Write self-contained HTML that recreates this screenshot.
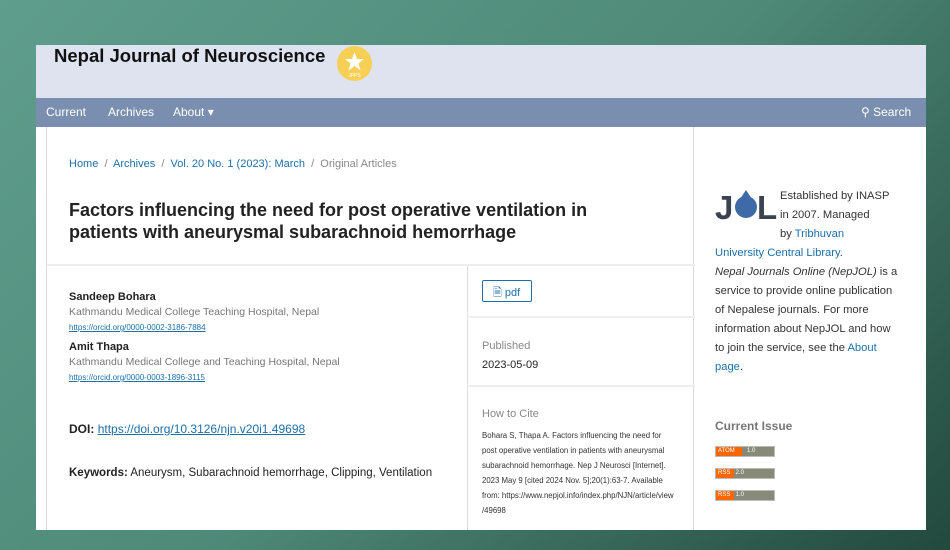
<!DOCTYPE html>
<html><head><meta charset="utf-8"><style>
*{margin:0;padding:0;box-sizing:border-box}
body{width:950px;height:550px;overflow:hidden;background:linear-gradient(135deg,#5f9d8c 0%,#4f8a78 50%,#22493e 100%);font-family:"Liberation Sans",sans-serif;position:relative;color:#222}
.page{position:absolute;left:36px;top:45px;width:890px;height:485px;background:#fff;overflow:hidden}
.hdr{position:absolute;left:0;top:0;width:890px;height:53px;background:#dfe3f0}
.hdr h1{position:absolute;left:18px;top:0;font-size:18.5px;font-weight:bold;color:#111}
.badge{position:absolute;left:301px;top:1px;width:35px;height:35px;border-radius:50%;background:#f8cf55}
.nav{position:absolute;left:0;top:53px;width:890px;height:29px;background:#7a8fb0;color:#fff;font-size:12px}
.nav span{position:absolute;top:7px}
a,.lk{color:#1d6fa8}
.main{position:absolute;left:10px;top:82px;width:648px;height:410px;border-left:1px solid #ddd;border-right:1px solid #ddd}
.side{position:absolute;left:679px;top:82px;width:200px}
.abs{position:absolute}
.bc{left:22px;top:31px;font-size:11px;color:#888}
.bc a{color:#1d6fa8;text-decoration:none}
.ttl{left:22px;top:72px;font-size:18px;font-weight:bold;line-height:22px;color:#222;width:560px}
.hl{left:0;top:137px;width:648px;height:2px;background:#eee}
.vl{left:420px;top:139px;width:1px;height:280px;background:#ddd}
.name{font-size:11px;font-weight:bold;color:#222}
.aff{font-size:10.5px;color:#777}
.orc{font-size:8px;color:#1d6fa8;text-decoration:underline}
.sm{font-size:11px;color:#888}
.rb{position:absolute;left:0;width:60px;height:11px;background:#888a78;border:1px solid #bbb;font-size:6px;line-height:9px;color:#fff}
.rb span{display:inline-block;height:9px;background:#f60;padding-left:2px}
</style></head><body>
<div class="page">
<div class="hdr"><h1>Nepal Journal of Neuroscience</h1>
<div class="badge"><svg width="35" height="35" viewBox="0 0 35 35"><polygon points="17.5,6 20,13 27,13 21.5,17.5 23.5,24.5 17.5,20 11.5,24.5 13.5,17.5 8,13 15,13" fill="#fff"/><text x="17.5" y="31" font-size="5" fill="#fff" text-anchor="middle" font-family="Liberation Sans">JPPS</text></svg></div></div>
<div class="nav"><span style="left:10px">Current</span><span style="left:72px">Archives</span><span style="left:137px">About ▾</span><span style="left:825px">⚲ Search</span></div>
<div class="main">
<div class="abs bc"><a>Home</a> &nbsp;/&nbsp; <a>Archives</a> &nbsp;/&nbsp; <a>Vol. 20 No. 1 (2023): March</a> &nbsp;/&nbsp; Original Articles</div>
<div class="abs ttl">Factors influencing the need for post operative ventilation in patients with aneurysmal subarachnoid hemorrhage</div>
<div class="abs hl"></div>
<div class="abs vl"></div>
<div class="abs" style="left:420px;top:189px;width:228px;height:2px;background:#eee"></div>
<div class="abs" style="left:420px;top:258px;width:228px;height:2px;background:#eee"></div>
<div class="abs" style="left:22px;top:163px;line-height:15px">
<div class="name">Sandeep Bohara</div><div class="aff">Kathmandu Medical College Teaching Hospital, Nepal</div><div class="orc">https://orcid.org/0000-0002-3186-7884</div>
<div class="name" style="margin-top:5px">Amit Thapa</div><div class="aff">Kathmandu Medical College and Teaching Hospital, Nepal</div><div class="orc">https://orcid.org/0000-0003-1896-3115</div></div>
<div class="abs" style="left:22px;top:295px;font-size:12px"><b>DOI:</b> <span class="lk" style="text-decoration:underline">https://doi.org/10.3126/njn.v20i1.49698</span></div>
<div class="abs" style="left:22px;top:340px;font-size:11.5px"><b>Keywords:</b> Aneurysm, Subarachnoid hemorrhage, Clipping, Ventilation</div>
<div class="abs" style="left:435px;top:153px;width:50px;height:22px;border:1px solid #1d6fa8;border-radius:2px;font-size:11px;color:#1d6fa8;padding:3px 0 0 10px">🗎 pdf</div>
<div class="abs sm" style="left:435px;top:213px">Published</div>
<div class="abs" style="left:435px;top:232px;font-size:11px">2023-05-09</div>
<div class="abs sm" style="left:435px;top:281px">How to Cite</div>
<div class="abs" style="left:435px;top:301px;font-size:7.8px;line-height:15px;width:195px;color:#333">Bohara S, Thapa A. Factors influencing the need for post operative ventilation in patients with aneurysmal subarachnoid hemorrhage. Nep J Neurosci [Internet]. 2023 May 9 [cited 2024 Nov. 5];20(1):63-7. Available from: https://www.nepjol.info/index.php/NJN/article/view /49698</div>
</div>
<div class="side">
<svg class="abs" style="left:0;top:60px" width="64" height="34" viewBox="0 0 64 34"><text x="0" y="32" font-size="33" font-weight="bold" fill="#3b4350" font-family="Liberation Sans">J</text><circle cx="31" cy="20" r="11" fill="#3e6aa8"/><path d="M31 3 L25 12 L37 12Z" fill="#3e6aa8"/><text x="42" y="32" font-size="33" font-weight="bold" fill="#3b4350" font-family="Liberation Sans">L</text></svg>
<div class="abs" style="left:0;top:60px;font-size:11.2px;line-height:19px;width:188px;color:#333">
<div style="padding-left:65px">Established by INASP<br>in 2007. Managed<br>by <span class="lk">Tribhuvan</span></div>
<span class="lk">University Central Library</span>.<br><i>Nepal Journals Online (NepJOL)</i> is a service to provide online publication of Nepalese journals. For more information about NepJOL and how to join the service, see the <span class="lk">About page</span>.</div>
<div class="abs" style="left:0;top:292px;font-size:12px;font-weight:bold;color:#777">Current Issue</div>
<div class="rb" style="top:319px"><span style="width:26px">ATOM</span> &nbsp; 1.0</div>
<div class="rb" style="top:341px"><span style="width:18px">RSS</span> 2.0</div>
<div class="rb" style="top:363px"><span style="width:18px">RSS</span> 1.0</div>
</div>
</div>
</body></html>
